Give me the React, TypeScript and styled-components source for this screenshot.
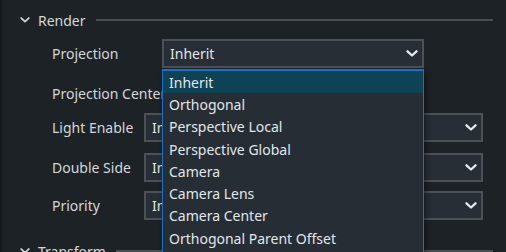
import React from 'react';
import styled, { createGlobalStyle } from 'styled-components';

const GlobalStyle = createGlobalStyle`
  html, body {
    margin: 0;
    padding: 0;
    background: #1d2227;
  }
  body {
    font-family: 'Noto Sans', 'Open Sans', sans-serif;
    overflow: hidden;
  }
`;

const Page = styled.div`
  width: 506px;
  height: 252px;
  box-sizing: border-box;
  border-left: 2px solid #15181c;
  background: #1d2227;
  overflow: hidden;
  position: relative;
`;

const Section = styled.div`
  display: flex;
  flex-direction: column;
`;

const SectionHeader = styled.div<{ top: number }>`
  display: flex;
  align-items: center;
  flex-shrink: 0;
  height: 20px;
  margin-top: ${(p) => p.top}px;
  padding-left: 18px;
  padding-right: 13px;
  gap: 8px;
  color: #d3d7db;
  font-size: 14px;
`;

const HeaderLine = styled.div`
  flex: 1;
  height: 2px;
  background: #4a4e53;
  margin-left: 2px;
`;

const Rows = styled.div`
  display: flex;
  flex-direction: column;
`;

const Row = styled.div<{ h: number; top: number }>`
  display: flex;
  align-items: center;
  flex-shrink: 0;
  height: ${(p) => p.h}px;
  margin-top: ${(p) => p.top}px;
  padding-left: 50px;
`;

const Label = styled.div<{ w: number }>`
  width: ${(p) => p.w}px;
  color: #d3d7db;
  font-size: 14px;
  white-space: nowrap;
  overflow: hidden;
`;

const SelectBox = styled.div<{ w: number }>`
  width: ${(p) => p.w}px;
  height: 29px;
  box-sizing: border-box;
  display: flex;
  align-items: center;
  justify-content: space-between;
  padding: 0 4px 0 6px;
  background: #272e35;
  border: 2px solid #4b5157;
  color: #e2e6ea;
  font-size: 14px;
`;

const DropList = styled.div`
  position: absolute;
  left: 160px;
  top: 69px;
  width: 262px;
  box-sizing: border-box;
  background: #262d34;
  border: 1px solid #1c6fc2;
  border-top-width: 2px;
  padding-bottom: 3px;
  box-shadow: 2px 3px 6px rgba(0, 0, 0, 0.45);
  z-index: 5;
`;

const Option = styled.div<{ active?: boolean }>`
  height: 22.3px;
  display: flex;
  align-items: center;
  padding-left: 6px;
  font-size: 14px;
  color: #e2e6ea;
  background: ${(p) => (p.active ? '#0e4356' : 'transparent')};
`;

function Chevron({ color = '#e6e8ea', size = 12 }: { color?: string; size?: number }) {
  return (
    <svg width={size} height={size * 0.6} viewBox="0 0 12 7">
      <path d="M1.5 1.2 L6 5.4 L10.5 1.2" fill="none" stroke={color} strokeWidth="2.3" strokeLinecap="round" strokeLinejoin="round" />
    </svg>
  );
}

const options = [
  'Inherit',
  'Orthogonal',
  'Perspective Local',
  'Perspective Global',
  'Camera',
  'Camera Lens',
  'Camera Center',
  'Orthogonal Parent Offset',
];

export default function App() {
  return (
    <Page>
      <GlobalStyle />
      <Section>
        <SectionHeader top={10}>
          <Chevron color="#c9cdd1" size={10} />
          <span>Render</span>
          <HeaderLine />
        </SectionHeader>
        <Rows>
          <Row h={29} top={9}>
            <Label w={110}>Projection</Label>
            <SelectBox w={262}>
              <span>Inherit</span>
              <Chevron />
            </SelectBox>
          </Row>
          <Row h={40} top={5}>
            <Label w={110}>Projection Center</Label>
          </Row>
          <Row h={29} top={0}>
            <Label w={92}>Light Enable</Label>
            <SelectBox w={339}>
              <span>Inherit</span>
              <Chevron />
            </SelectBox>
          </Row>
          <Row h={29} top={11}>
            <Label w={92}>Double Side</Label>
            <SelectBox w={339}>
              <span>Inherit</span>
              <Chevron />
            </SelectBox>
          </Row>
          <Row h={29} top={9}>
            <Label w={92}>Priority</Label>
            <SelectBox w={339}>
              <span>Inherit</span>
              <Chevron />
            </SelectBox>
          </Row>
        </Rows>
        <SectionHeader top={21}>
          <Chevron color="#c9cdd1" size={10} />
          <span>Transform</span>
          <HeaderLine />
        </SectionHeader>
      </Section>
      <DropList>
        {options.map((o, i) => (
          <Option key={o} active={i === 0}>
            {o}
          </Option>
        ))}
      </DropList>
    </Page>
  );
}
